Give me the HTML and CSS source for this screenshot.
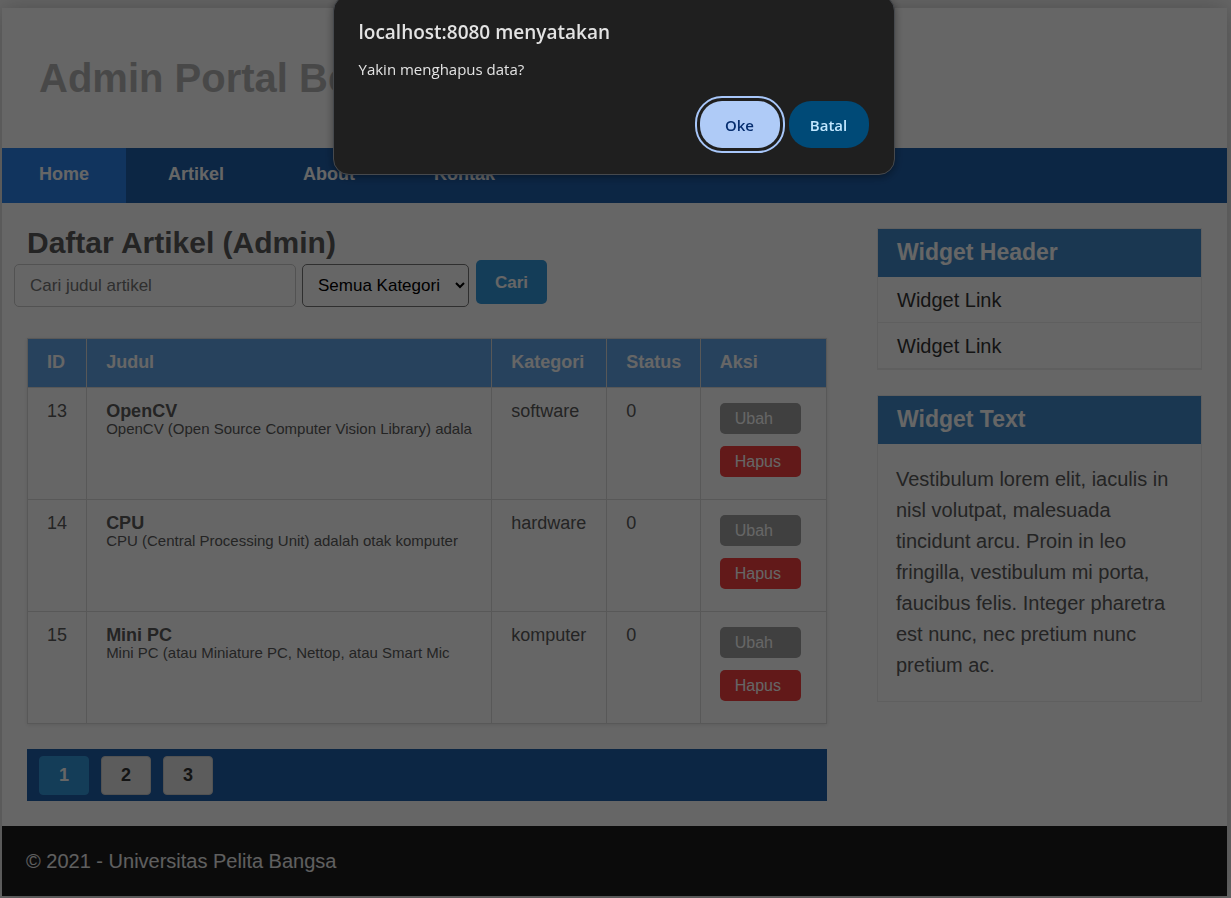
FILE: index.html
```html
<!DOCTYPE html>
<html lang="id">
<head>
<meta charset="utf-8">
<meta name="viewport" content="width=device-width, initial-scale=1">
<title>Admin Portal</title>
<link rel="stylesheet" href="styles.css">
</head>
<body>
<div class="container">
  <header class="site-header">
    <h1 class="site-title">Admin Portal Be</h1>
  </header>
  <nav class="site-nav">
    <a class="nav-link active" href="#">Home</a>
    <a class="nav-link" href="#">Artikel</a>
    <a class="nav-link" href="#">About</a>
    <a class="nav-link" href="#">Kontak</a>
  </nav>
  <div class="wrapper">
    <main class="main">
      <h2 class="page-title">Daftar Artikel (Admin)</h2>
      <form class="search-form">
        <input class="field search-input" type="text" name="q" placeholder="Cari judul artikel" aria-label="Cari judul artikel">
        <select class="field category-select" name="kategori" aria-label="Kategori">
          <option>Semua Kategori</option>
        </select>
        <button class="search-button" type="button">Cari</button>
      </form>
      <table class="articles">
        <colgroup>
          <col class="col-id"><col class="col-title"><col class="col-category"><col class="col-status"><col>
        </colgroup>
        <thead>
          <tr><th>ID</th><th>Judul</th><th>Kategori</th><th>Status</th><th>Aksi</th></tr>
        </thead>
        <tbody>
          <tr>
            <td>13</td>
            <td><b class="article-title">OpenCV</b><p class="excerpt">OpenCV (Open Source Computer Vision Library) adala</p></td>
            <td>software</td>
            <td>0</td>
            <td class="actions"><a class="btn" href="#">Ubah</a><a class="btn btn-danger" href="#">Hapus</a></td>
          </tr>
          <tr>
            <td>14</td>
            <td><b class="article-title">CPU</b><p class="excerpt">CPU (Central Processing Unit) adalah otak komputer</p></td>
            <td>hardware</td>
            <td>0</td>
            <td class="actions"><a class="btn" href="#">Ubah</a><a class="btn btn-danger" href="#">Hapus</a></td>
          </tr>
          <tr>
            <td>15</td>
            <td><b class="article-title">Mini PC</b><p class="excerpt">Mini PC (atau Miniature PC, Nettop, atau Smart Mic</p></td>
            <td>komputer</td>
            <td>0</td>
            <td class="actions"><a class="btn" href="#">Ubah</a><a class="btn btn-danger" href="#">Hapus</a></td>
          </tr>
        </tbody>
      </table>
      <nav class="pagination" aria-label="Halaman">
        <a class="page-link current" href="#">1</a>
        <a class="page-link" href="#">2</a>
        <a class="page-link" href="#">3</a>
      </nav>
    </main>
    <aside class="sidebar">
      <section class="widget">
        <h3 class="widget-title">Widget Header</h3>
        <ul class="widget-list">
          <li><a class="widget-link" href="#">Widget Link</a></li>
          <li><a class="widget-link" href="#">Widget Link</a></li>
        </ul>
      </section>
      <section class="widget">
        <h3 class="widget-title">Widget Text</h3>
        <p class="widget-text">Vestibulum lorem elit, iaculis in nisl volutpat, malesuada tincidunt arcu. Proin in leo fringilla, vestibulum mi porta, faucibus felis. Integer pharetra est nunc, nec pretium nunc pretium ac.</p>
      </section>
    </aside>
  </div>
  <footer class="site-footer">
    <p class="copyright">© 2021 - Universitas Pelita Bangsa</p>
  </footer>
</div>
<div class="backdrop"></div>
<dialog class="confirm" open aria-labelledby="confirm-title">
  <h2 class="confirm-title" id="confirm-title">localhost:8080 menyatakan</h2>
  <p class="confirm-text">Yakin menghapus data?</p>
  <div class="confirm-actions">
    <button class="confirm-button primary" type="button">Oke</button>
    <button class="confirm-button" type="button">Batal</button>
  </div>
</dialog>
</body>
</html>
```

FILE: styles.css
```css
* {
  box-sizing: border-box;
  margin: 0;
  padding: 0;
}

body {
  background: #fff;
  color: #5a5a5a;
  font-family: "Liberation Sans", Arial, sans-serif;
  font-size: 20px;
}

a {
  color: inherit;
  text-decoration: none;
}

.container {
  margin: 8px 4px 2px 2px;
  background: #fff;
  box-shadow: 0 0 24px rgba(0, 0, 0, 0.25);
}

/* Header and navigation */
.site-header {
  padding: 47px 37px;
}

.site-title {
  color: #b5b5b5;
  font-size: 40px;
  line-height: 46px;
}

.site-nav {
  display: flex;
  flex-wrap: wrap;
  gap: 5px;
  background: #1f5faa;
}

.nav-link {
  padding: 16px 37px 19px;
  color: #fff;
  font-size: 18px;
  font-weight: bold;
  line-height: 20px;
}

.nav-link.active {
  background: #2b83ea;
}

/* Two columns */
.wrapper {
  display: grid;
  grid-template-columns: 34fr 15fr;
}

.main {
  padding: 22px 25px 25px;
}

.page-title {
  font-size: 30px;
  line-height: 35px;
}

.search-form {
  display: flex;
  align-items: flex-start;
  gap: 6px;
  margin: 0 0 31px -13px;
}

.field {
  height: 43px;
  margin-top: 4px;
  padding: 0 15px;
  border: 1px solid #ccc;
  border-radius: 5px;
  background: #fff;
  color: #000;
  font-family: inherit;
  font-size: 17px;
}

.search-input {
  width: 282px;
}

.search-input::placeholder {
  color: #757575;
}

.category-select {
  width: 167px;
  padding: 0 2px 0 11px;
  border-color: #767676;
}

.search-button {
  height: 44px;
  margin-left: 1px;
  padding: 2px 19px 0;
  border: 0;
  border-radius: 5px;
  background: #3498db;
  color: #fff;
  font-family: inherit;
  font-size: 17px;
  font-weight: bold;
}

/* Article table */
.articles {
  width: 100%;
  border-collapse: collapse;
  table-layout: fixed;
  box-shadow: 0 1px 4px rgba(0, 0, 0, 0.1);
}

.col-id {
  width: 7.4%;
}

.col-title {
  width: 50.7%;
}

.col-category {
  width: 14.4%;
}

.col-status {
  width: 11.7%;
}

.articles th,
.articles td {
  padding: 13px 19px;
  border: 1px solid #ddd;
  font-size: 18px;
  line-height: 20px;
  text-align: left;
  vertical-align: top;
}

.articles th {
  padding: 13px 19px 15px;
  background: #62a5e8;
  color: #fff;
}

.article-title {
  display: block;
  font-size: 18px;
}

.excerpt {
  font-size: 15px;
  line-height: 16px;
  white-space: nowrap;
}

.articles .actions {
  padding: 15px 25px 10px 19px;
}

.btn {
  display: block;
  margin-bottom: 12px;
  padding: 6px 15px;
  border-radius: 5px;
  background: #a0a0a0;
  color: #fff;
  font-size: 16px;
  line-height: 19px;
}

.btn-danger {
  background: #f43f3f;
}

/* Pagination */
.pagination {
  display: flex;
  gap: 12px;
  margin-top: 25px;
  padding: 7px 12px 6px;
  background: #1f5faa;
}

.page-link {
  width: 50px;
  padding: 8px 0 9px;
  border: 1px solid #ccc;
  border-radius: 4px;
  background: #e6e6e6;
  color: #333;
  font-size: 18px;
  font-weight: bold;
  line-height: 20px;
  text-align: center;
}

.page-link.current {
  border-color: #3498db;
  background: #3498db;
  color: #fff;
}

/* Sidebar */
.sidebar {
  padding: 25px;
}

.widget {
  margin-bottom: 25px;
  border: 1px solid #eee;
}

.widget-title {
  padding: 10px 19px 11px;
  background: #428bca;
  color: #fff;
  font-size: 23px;
  line-height: 27px;
}

.widget-list {
  list-style: none;
}

.widget-link {
  display: block;
  padding: 12px 19px 10px;
  border-bottom: 1px solid #eee;
  color: #333;
  line-height: 23px;
}

.widget-text {
  padding: 20px 18px;
  line-height: 31px;
}

/* Footer */
.site-footer {
  padding: 24px 24px 23px;
  background: #1d1d1d;
  color: #eee;
}

.copyright {
  line-height: 23px;
}

/* Confirmation dialog */
.backdrop {
  position: fixed;
  inset: 0;
  background: rgba(0, 0, 0, 0.6);
}

.confirm {
  position: fixed;
  top: -5px;
  left: 50%;
  width: 562px;
  max-width: 100%;
  margin-left: -283px;
  padding: 22px 25px 26px;
  border: 1px solid #46494d;
  border-radius: 16px;
  background: #1f1f1f;
  color: #e3e3e3;
  box-shadow: 0 2px 8px rgba(0, 0, 0, 0.4);
  font-family: "Open Sans", "Segoe UI", sans-serif;
}

.confirm-title {
  font-size: 19px;
  font-weight: 600;
  line-height: 28px;
}

.confirm-text {
  margin-top: 12px;
  font-size: 15px;
  line-height: 22px;
}

.confirm-actions {
  display: flex;
  justify-content: flex-end;
  gap: 9px;
  margin-top: 21px;
}

.confirm-button {
  min-width: 80px;
  height: 47px;
  padding: 0 21px;
  border: 0;
  border-radius: 22px;
  background: #004a77;
  color: #c2e7ff;
  font-family: inherit;
  font-size: 15px;
  font-weight: 600;
}

.confirm-button.primary {
  background: #afcbf7;
  color: #062e6f;
  outline: 2px solid #a8c7fa;
  outline-offset: 3px;
}
```
